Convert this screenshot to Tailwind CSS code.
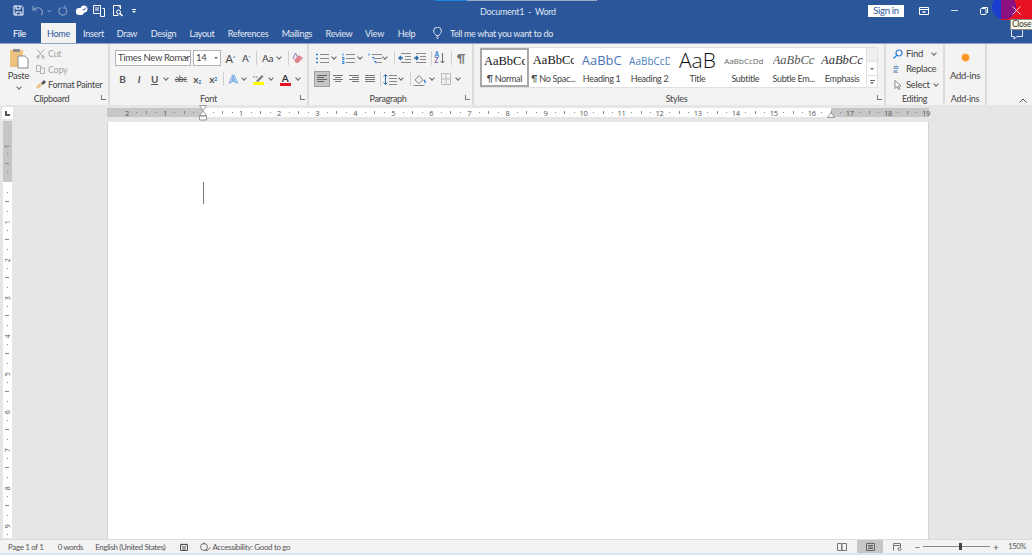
<!DOCTYPE html>
<html lang="en">
<head>
<meta charset="UTF-8">
<title>Document1 - Word</title>
<script src="https://cdn.jsdelivr.net/npm/@tailwindcss/browser@4"></script>
</head>
<body class="w-[1032px] h-[555px] overflow-hidden bg-[#e6e6e6] font-['Lato',sans-serif] text-[#444] text-[9px] tracking-[-0.3px] leading-none flex flex-col">

<!-- title bar -->
<header class="relative h-[23px] shrink-0 bg-[#2b579a] text-white flex items-center">
  <div class="absolute left-[435px] top-0 h-px w-[32px] bg-[#1a86e0]"></div>
  <div class="absolute left-[467px] top-0 h-px w-[130px] bg-[#9aa9c4]"></div>
  <div class="flex items-center pl-[13px] h-full w-[440px] pb-[2px]">
    <svg class="w-[11px] h-[11px]" viewBox="0 0 11 11" fill="none" stroke="#fff"><path d="M1 1h7.5L10 2.5V10H1z"/><path d="M3 1v3h4V1M3 10V7h5v3"/></svg>
    <svg class="w-[12px] h-[11px] ml-[8px] opacity-40" viewBox="0 0 12 11" fill="none" stroke="#fff" stroke-width="1.2"><path d="M1 1v4h4M1.5 5C3 2.5 7 2 9 4s1.5 4.5 0 6"/></svg>
    <span class="ml-[4px] w-[3px] h-[3px] border-r border-b border-white/40 rotate-45"></span>
    <svg class="w-[11px] h-[11px] ml-[6px] opacity-40" viewBox="0 0 11 11" fill="none" stroke="#fff" stroke-width="1.2"><path d="M4 2.5a4 4 0 1 0 4 .3M8 .5V3H5.5"/></svg>
    <svg class="w-[13px] h-[12px] ml-[7px]" viewBox="0 0 13 12" fill="#fff"><rect x="1" y="3" width="8" height="7" rx="3"/><circle cx="9" cy="4" r="3.5"/><path d="M7.500 4l1.200 1.200L11 2.500" stroke="#2b579a" fill="none"/></svg>
    <svg class="w-[12px] h-[12px] ml-[5px]" viewBox="0 0 12 12" fill="none" stroke="#fff"><path d="M.5.5h7v8h-7zM2 3h4M2 5h4"/><path d="M9.500 3.500h2v8h-4v-3"/></svg>
    <svg class="w-[12px] h-[12px] ml-[7px]" viewBox="0 0 12 12" fill="none" stroke="#fff"><path d="M8.500 4V.5h-7v10h5M6 .5 8.500 3"/><circle cx="6.500" cy="7" r="2"/><path d="m8 8.500 2.500 2.500" stroke-width="1.5"/></svg>
    <div class="ml-[8px] flex flex-col items-center gap-px"><i class="w-[4px] h-px bg-white"></i><i class="border-x-[2px] border-t-[2px] border-x-transparent border-t-white"></i></div>
  </div>
  <div class="w-[390px] text-[9px] text-[#dde5f1] pl-[40px] pb-[1px]">Document1 &nbsp;- &nbsp;Word</div>
  <div class="w-[36px] h-[12px] ml-[38px] mb-[1px] bg-white text-[#2b579a] text-[9.5px] flex items-center justify-center">Sign in</div>
  <svg class="w-[10px] h-[8px] ml-[15px] mb-[1px]" viewBox="0 0 10 8" fill="none" stroke="#fff"><path d="M.5.5h9v7h-9zM.5 2.500h9"/><path d="M3.500 5h3" stroke-width="1.5"/></svg>
  <i class="block w-[7px] h-px bg-white/80 ml-[22px] mb-[2px]"></i>
  <svg class="w-[8px] h-[8px] ml-[22px] mb-[1px]" viewBox="0 0 8 8" fill="none" stroke="#fff"><rect x=".5" y="1.500" width="5.500" height="6" rx="1"/><path d="M2.500 1V.5H7.500V6"/></svg>
  <!-- close button with pointer highlight -->
  <div class="absolute left-[1001px] right-0 top-0 h-[20px] bg-[#e81123]"></div>
  <div class="absolute left-[992px] top-[-5px] w-[24px] h-[24px] rounded-full overflow-hidden bg-[#1a3fd0]"><div class="ml-[9px] h-full bg-[#8a0f80]"></div></div>
  <svg class="absolute left-[1012px] top-[6px] w-[9px] h-[9px]" viewBox="0 0 9 9" stroke="#e9c9e6"><path d="M.5.5l8 8M8.500.5l-8 8"/></svg>
</header>

<!-- tabs -->
<nav class="relative h-[20px] shrink-0 bg-[#2b579a] text-[#e3e9f3] flex items-stretch">
  <div class="w-[41px] pl-[13px] flex items-center text-white">File</div>
  <div class="w-[35px] bg-[#f3f3f3] text-[#2b579a] flex items-center justify-center">Home</div>
  <div class="w-[35px] flex items-center justify-center">Insert</div>
  <div class="w-[32px] flex items-center justify-center">Draw</div>
  <div class="w-[41px] flex items-center justify-center">Design</div>
  <div class="w-[36px] flex items-center justify-center">Layout</div>
  <div class="w-[56px] flex items-center justify-center">References</div>
  <div class="w-[42px] flex items-center justify-center">Mailings</div>
  <div class="w-[42px] flex items-center justify-center">Review</div>
  <div class="w-[29px] flex items-center justify-center">View</div>
  <div class="w-[35px] flex items-center justify-center">Help</div>
  <svg class="w-[9px] h-[12px] ml-[9px] self-center" viewBox="0 0 9 12" fill="none" stroke="#fff" stroke-width=".8"><path d="M3 8.500C2.500 7 .6 6 .6 4a3.900 3.900 0 0 1 7.800 0C8.400 6 6.500 7 6 8.500zM3.200 10h2.600M3.800 11.500h1.400"/></svg>
  <div class="ml-[8px] flex items-center">Tell me what you want to do</div>
  <svg class="absolute left-[1011px] top-[6px] w-[12px] h-[11px]" viewBox="0 0 12 11" fill="none" stroke="#e3e9f3"><path d="M.5.5h11v7H6l-3 2.500V7.500H.5z"/></svg>
  <!-- tooltip -->
  <div class="absolute left-[1010px] top-[-4px] w-[23px] h-[11px] bg-[#fdfbe8] border border-[#8a8a8a] text-[#333] text-[8.5px] flex items-center justify-center">Close</div>
</nav>

<!-- ribbon -->
<section class="h-[62px] shrink-0 bg-[#f3f3f3] border-t border-[#8fa6c9] flex">
  <!-- clipboard -->
  <div class="w-[110px] border-r-2 border-[#dcdcdc] flex flex-col">
    <div class="h-[50px] flex">
      <div class="w-[36px] pl-px flex flex-col items-center pt-[4px]">
        <svg class="w-[20px] h-[21px]" viewBox="0 0 20 21"><rect x="1" y="2" width="13" height="17" fill="#ecc27e"/><rect x="4" y="1" width="7" height="3" fill="#8d8d8d"/><path d="M9 8h7l3 3v9H9z" fill="#fff" stroke="#8a8a8a"/></svg>
        <span class="mt-[2px] text-[9.5px]">Paste</span>
        <span class="mt-[4px] w-[4px] h-[4px] border-r border-b border-[#666] rotate-45"></span>
      </div>
      <div class="flex flex-col pt-[5px] gap-[6.5px]">
        <div class="flex items-center gap-[3px] h-[9px] text-[#a6a6a6]"><svg class="w-[9px] h-[10px]" viewBox="0 0 9 10" fill="none" stroke="#a6a6a6"><path d="M1 .5 6.500 7M8 .5 2.500 7"/><circle cx="2" cy="8" r="1.2"/><circle cx="7" cy="8" r="1.2"/></svg>Cut</div>
        <div class="flex items-center gap-[3px] h-[9px] text-[#a6a6a6]"><svg class="w-[9px] h-[9px]" viewBox="0 0 9 9" fill="none" stroke="#b0b0b0"><path d="M.5.5h4v6h-4zM4.500 3h4v5.500h-4z"/></svg>Copy</div>
        <div class="flex items-center gap-[2px] h-[9px]"><svg class="w-[10px] h-[9px]" viewBox="0 0 10 9"><path d="M0 7l4-4 2 2-4 4z" fill="#ecc27e"/><path d="M5 3l3-3 2 2-3 3z" fill="#555"/></svg>Format Painter</div>
      </div>
    </div>
    <div class="relative flex-1 text-center pr-[5px]">Clipboard<span class="absolute right-[2px] top-[1px] w-[5px] h-[5px] border-l border-b border-[#777]"></span></div>
  </div>
  <!-- font -->
  <div class="w-[199px] pl-[5px] border-r-2 border-[#dcdcdc] flex flex-col">
    <div class="h-[50px] flex flex-col">
      <div class="flex items-center h-[16px] mt-[6px]">
        <div class="w-[76px] h-[16px] bg-white border border-[#b5b5b5] flex items-center pl-[2px] text-[9.5px] whitespace-nowrap overflow-hidden relative">Times New Romar<span class="absolute right-[2px] top-[6px] border-x-[2px] border-t-[2px] border-x-transparent border-t-[#666]"></span></div>
        <div class="w-[28px] h-[16px] ml-[2px] bg-white border border-[#b5b5b5] flex items-center pl-[2px] text-[9.5px] relative">14<span class="absolute right-[2px] top-[6px] border-x-[2px] border-t-[2px] border-x-transparent border-t-[#666]"></span></div>
        <span class="ml-[3px] w-[13px] text-center text-[11px]">A<sup class="text-[5px] text-[#2b6cb0]">^</sup></span>
        <span class="ml-[2px] w-[14px] text-center text-[10px]">A<sup class="text-[5px] text-[#2b6cb0]">ˇ</sup></span>
        <i class="w-px h-[14px] bg-[#d0d0d0] ml-[3px]"></i>
        <span class="ml-[3px] w-[15px] text-center text-[10px]">Aa</span>
        <span class="ml-[2px] w-[4px] h-[4px] -mt-[2px] border-r border-b border-[#666] rotate-45"></span>
        <i class="w-px h-[14px] bg-[#d0d0d0] ml-[7px]"></i>
        <svg class="w-[12px] h-[12px] ml-[3px]" viewBox="0 0 12 12"><path d="M2 8 7 3l4 3-5 5H4z" fill="#e0858f"/><path d="M1 7 3.500 1 5.500 5" stroke="#8a7ab8" fill="none"/></svg>
      </div>
      <div class="flex items-center h-[16px] mt-[5px] text-[#555] text-[10px]">
        <b class="w-[15px] text-center">B</b>
        <i class="ml-[1px] w-[16px] text-center font-bold">I</i>
        <u class="w-[15px] text-center font-bold">U</u>
        <span class="w-[8px] flex justify-center"><span class="w-[4px] h-[4px] -mt-[2px] border-r border-b border-[#666] rotate-45"></span></span>
        <s class="ml-[3px] w-[16px] text-center text-[8.5px]">abc</s>
        <span class="w-[16px] text-center font-bold">x<sub class="text-[5px] text-[#2b6cb0]">2</sub></span>
        <span class="w-[16px] text-center font-bold">x<sup class="text-[5px] text-[#2b6cb0]">2</sup></span>
        <i class="w-px h-[14px] bg-[#d0d0d0] ml-[2px]"></i>
        <span class="ml-[2px] w-[14px] text-center text-[12px] text-white font-bold [-webkit-text-stroke:0.6px_#2b7cd3]">A</span>
        <span class="w-[7px] flex justify-center"><span class="w-[4px] h-[4px] -mt-[2px] border-r border-b border-[#666] rotate-45"></span></span>
        <span class="ml-[5px] w-[12px] flex flex-col items-center"><svg class="w-[11px] h-[8px]" viewBox="0 0 11 8"><path d="M3 7l6-6 1.500 1.500L5 8z" fill="#777"/><path d="M0 3h5" stroke="#777" stroke-dasharray="1 .5"/></svg><i class="w-[11px] h-[3px] bg-[#ffff00]"></i></span>
        <span class="ml-[3px] w-[8px] flex justify-center"><span class="w-[4px] h-[4px] -mt-[2px] border-r border-b border-[#666] rotate-45"></span></span>
        <span class="ml-[3px] w-[14px] flex flex-col items-center text-[10px] font-bold text-[#333]">A<i class="w-[11px] h-[3px] bg-[#e81123]"></i></span>
        <span class="ml-[2px] w-[8px] flex justify-center"><span class="w-[4px] h-[4px] -mt-[2px] border-r border-b border-[#666] rotate-45"></span></span>
      </div>
    </div>
    <div class="relative flex-1 text-center pr-[5px]">Font<span class="absolute right-[2px] top-[1px] w-[5px] h-[5px] border-l border-b border-[#777]"></span></div>
  </div>
  <!-- paragraph -->
  <div class="w-[165px] border-r-2 border-[#dcdcdc] flex flex-col">
    <div class="h-[50px] flex flex-col">
      <div class="flex items-center h-[16px] mt-[6px]">
        <svg class="ml-[6px] w-[14px] h-[11px]" viewBox="0 0 14 11" fill="none" stroke="#888"><path d="M5 1.500h9M5 5.500h9M5 9.500h9"/><path d="M1 1.500h2M1 5.500h2M1 9.500h2" stroke="#2b7cd3" stroke-width="1.5"/></svg>
        <span class="ml-[2px] w-[6px] flex justify-center"><span class="w-[4px] h-[4px] -mt-[2px] border-r border-b border-[#666] rotate-45"></span></span>
        <svg class="ml-[4px] w-[14px] h-[11px]" viewBox="0 0 14 11" fill="none" stroke="#888"><path d="M5 1.500h9M5 5.500h9M5 9.500h9"/><path d="M2 .5v2M1 4.500h2v2H1M1 8.500h2v2H1" stroke="#2b7cd3"/></svg>
        <span class="ml-[2px] w-[6px] flex justify-center"><span class="w-[4px] h-[4px] -mt-[2px] border-r border-b border-[#666] rotate-45"></span></span>
        <svg class="ml-[5px] w-[14px] h-[11px]" viewBox="0 0 14 11" fill="none" stroke="#888"><path d="M4 1.500h10M7 5.500h7M9 9.500h5"/><path d="M1 .5v2M4 4.500h2v2M6 8.500h2v2" stroke="#2b7cd3"/></svg>
        <span class="w-[6px] flex justify-center"><span class="w-[4px] h-[4px] -mt-[2px] border-r border-b border-[#666] rotate-45"></span></span>
        <i class="w-px h-[14px] bg-[#d0d0d0] ml-[6px]"></i>
        <svg class="ml-[3px] w-[13px] h-[11px]" viewBox="0 0 13 11" fill="none" stroke="#888"><path d="M3 .5h10M7 3.500h6M7 6.500h6M3 9.500h10"/><path d="M5 5H1M3 3 1 5l2 2" stroke="#2b6cb0" stroke-width="1.5"/></svg>
        <svg class="ml-[2px] w-[13px] h-[11px]" viewBox="0 0 13 11" fill="none" stroke="#888"><path d="M3 .5h10M7 3.500h6M7 6.500h6M3 9.500h10"/><path d="M1 5h4M3 3l2 2-2 2" stroke="#2b6cb0" stroke-width="1.5"/></svg>
        <i class="w-px h-[14px] bg-[#d0d0d0] ml-[5px]"></i>
        <span class="ml-px w-[13px] flex items-center justify-center"><span class="flex flex-col text-[6.5px] leading-[6.5px] font-bold"><span class="text-[#2b7cd3]">A</span><span class="text-[#8a5db5]">Z</span></span><svg class="w-[5px] h-[11px] ml-px" viewBox="0 0 5 11" fill="none" stroke="#666"><path d="M2.500 0v10M.5 8l2 2 2-2"/></svg></span>
        <i class="w-px h-[14px] bg-[#d0d0d0] ml-[5px]"></i>
        <span class="ml-[2px] w-[14px] text-center text-[12px] font-bold text-[#777]">¶</span>
      </div>
      <div class="flex items-center h-[16px] mt-[5px]">
        <span class="ml-[5px] w-[16px] h-[16px] bg-[#c6c6c6] border border-[#9f9f9f] flex items-center justify-center"><svg class="w-[10px] h-[8px]" viewBox="0 0 10 8" stroke="#666"><path d="M0 .5h10M0 2.500h7M0 4.500h10M0 6.500h7"/></svg></span>
        <span class="ml-px w-[14px] flex justify-center"><svg class="w-[10px] h-[8px]" viewBox="0 0 10 8" stroke="#777"><path d="M0 .5h10M2 2.500h6M0 4.500h10M2 6.500h6"/></svg></span>
        <span class="ml-[2px] w-[14px] flex justify-center"><svg class="w-[10px] h-[8px]" viewBox="0 0 10 8" stroke="#777"><path d="M0 .5h10M3 2.500h7M0 4.500h10M3 6.500h7"/></svg></span>
        <span class="ml-[2px] w-[14px] flex justify-center"><svg class="w-[10px] h-[8px]" viewBox="0 0 10 8" stroke="#777"><path d="M0 .5h10M0 2.500h10M0 4.500h10M0 6.500h10"/></svg></span>
        <i class="w-px h-[14px] bg-[#d0d0d0] ml-[3px]"></i>
        <svg class="ml-[2px] w-[14px] h-[11px]" viewBox="0 0 14 11" fill="none" stroke="#888"><path d="M6 1.500h8M6 4.500h8M6 7.500h8M6 10.500h8"/><path d="M2.500 1v9M.5 2.500l2-2 2 2M.5 8.500l2 2 2-2" stroke="#2b6cb0"/></svg>
        <span class="ml-px w-[6px] flex justify-center"><span class="w-[4px] h-[4px] -mt-[2px] border-r border-b border-[#666] rotate-45"></span></span>
        <i class="w-px h-[14px] bg-[#d0d0d0] ml-[6px]"></i>
        <svg class="ml-[2px] w-[14px] h-[13px]" viewBox="0 0 14 13" fill="none" stroke="#888"><path d="M2 7 6 2.500 10 7l-4 3.500zM.5 12.500h11"/><path d="M11 7c1 1 1.500 2 1 3" stroke="#2b7cd3" stroke-width="1.5"/></svg>
        <span class="ml-[2px] w-[6px] flex justify-center"><span class="w-[4px] h-[4px] -mt-[2px] border-r border-b border-[#666] rotate-45"></span></span>
        <svg class="ml-[4px] w-[14px] h-[12px]" viewBox="0 0 14 12" fill="none" stroke="#bbb"><path d="M2.500.5h9v11h-9zM7 .5v11M2.500 6h9"/></svg>
        <span class="ml-[2px] w-[6px] flex justify-center"><span class="w-[4px] h-[4px] -mt-[2px] border-r border-b border-[#666] rotate-45"></span></span>
      </div>
    </div>
    <div class="relative flex-1 text-center pr-[5px]">Paragraph<span class="absolute right-[2px] top-[1px] w-[5px] h-[5px] border-l border-b border-[#777]"></span></div>
  </div>
  <!-- styles -->
  <div class="w-[412px] border-r-2 border-[#dcdcdc] flex flex-col">
    <div class="h-[50px] pl-[6px] pt-[3px]">
      <div class="w-[398px] h-[41px] bg-white border border-[#e0e0e0] flex tracking-normal">
        <div class="-ml-px w-[49px] h-[39px] border-2 border-[#a8a8a8] flex flex-col items-center overflow-hidden"><div class="h-[23px] w-[41px] overflow-hidden flex items-center whitespace-nowrap font-['Liberation_Serif'] text-[12.5px] text-[#111]">AaBbCc</div><span class="mt-[1px] whitespace-nowrap tracking-[-0.3px]">¶ Normal</span></div>
        <div class="w-[49px] flex flex-col items-center"><div class="h-[25px] w-[41px] overflow-hidden flex items-center whitespace-nowrap font-['Liberation_Serif'] text-[12.5px] text-[#111]">AaBbCc</div><span class="mt-[1px] whitespace-nowrap tracking-[-0.3px]">¶ No Spac...</span></div>
        <div class="w-[48px] flex flex-col items-center"><div class="h-[25px] w-[40px] overflow-hidden flex items-center whitespace-nowrap font-['Open_Sans'] text-[13px] text-[#4a74b4]">AaBbCc</div><span class="mt-[1px] whitespace-nowrap tracking-[-0.3px]">Heading 1</span></div>
        <div class="w-[48px] flex flex-col items-center"><div class="h-[25px] w-[41px] overflow-hidden flex items-center whitespace-nowrap font-['Open_Sans'] text-[10px] text-[#4a7ec0]">AaBbCcD</div><span class="mt-[1px] whitespace-nowrap tracking-[-0.3px]">Heading 2</span></div>
        <div class="w-[48px] flex flex-col items-center"><div class="h-[25px] w-[38px] overflow-hidden flex items-center justify-center whitespace-nowrap font-['Open_Sans'] text-[21px] font-light text-[#111]">AaB</div><span class="mt-[1px] whitespace-nowrap tracking-[-0.3px]">Title</span></div>
        <div class="w-[48px] flex flex-col items-center"><div class="h-[25px] w-[42px] overflow-hidden flex items-center whitespace-nowrap font-['Open_Sans'] text-[8px] text-[#666]">AaBbCcDd</div><span class="mt-[1px] whitespace-nowrap tracking-[-0.3px]">Subtitle</span></div>
        <div class="w-[49px] flex flex-col items-center"><div class="h-[25px] w-[42px] overflow-hidden flex items-center whitespace-nowrap font-['Liberation_Serif'] italic text-[12.5px] text-[#555]">AaBbCc</div><span class="mt-[1px] whitespace-nowrap tracking-[-0.3px]">Subtle Em...</span></div>
        <div class="w-[48px] flex flex-col items-center"><div class="h-[25px] w-[42px] overflow-hidden flex items-center whitespace-nowrap font-['Liberation_Serif'] italic text-[12.5px] text-[#333]">AaBbCc</div><span class="mt-[1px] whitespace-nowrap tracking-[-0.3px]">Emphasis</span></div>
        <div class="ml-auto w-[11px] flex flex-col border-l border-[#e0e0e0]">
          <div class="h-[14px] bg-[#efefef] border-b border-[#e0e0e0]"></div>
          <div class="h-[14px] border-b border-[#e0e0e0] flex items-center justify-center"><span class="border-x-[2px] border-t-[2px] border-x-transparent border-t-[#666]"></span></div>
          <div class="flex-1 flex flex-col items-center justify-center gap-px"><i class="w-[5px] h-px bg-[#666]"></i><span class="border-x-[2px] border-t-[2px] border-x-transparent border-t-[#666]"></span></div>
        </div>
      </div>
    </div>
    <div class="relative flex-1 text-center pr-[5px]">Styles<span class="absolute right-[2px] top-[1px] w-[5px] h-[5px] border-l border-b border-[#777]"></span></div>
  </div>
  <!-- editing -->
  <div class="w-[59px] border-r-2 border-[#dcdcdc] flex flex-col">
    <div class="h-[50px] pl-[7px] pt-[5px] flex flex-col gap-[6.5px] text-[9.5px]">
      <div class="flex items-center gap-[3px] h-[9px]"><svg class="w-[10px] h-[10px]" viewBox="0 0 10 10" fill="none" stroke="#2b7cd3" stroke-width="1.2"><circle cx="6" cy="4" r="3"/><path d="M4 6 .5 9.500"/></svg>Find<span class="ml-[6px] w-[4px] h-[4px] -mt-[2px] border-r border-b border-[#666] rotate-45"></span></div>
      <div class="flex items-center gap-[3px] h-[9px]"><span class="w-[10px] text-[5.5px] leading-[4px] text-[#2b6cb0]">ab<br>ac</span>Replace</div>
      <div class="flex items-center gap-[3px] h-[9px]"><svg class="w-[10px] h-[10px]" viewBox="0 0 10 10" fill="#fff" stroke="#888"><path d="M2 .5v8l2-2 1.500 3 1.500-.7L5.500 6H8z"/></svg>Select<span class="ml-[1px] w-[4px] h-[4px] -mt-[2px] border-r border-b border-[#666] rotate-45"></span></div>
    </div>
    <div class="flex-1 text-center">Editing</div>
  </div>
  <!-- add-ins -->
  <div class="w-[42px] border-r-2 border-[#dcdcdc] flex flex-col">
    <div class="h-[50px] flex flex-col items-center pt-[10px]">
      <i class="w-[7px] h-[7px] rounded-full bg-[#f7931e] ring-1 ring-[#fbd9a8]"></i>
      <span class="mt-[10px] text-[9.5px]">Add-ins</span>
    </div>
    <div class="flex-1 text-center">Add-ins</div>
  </div>
  <div class="flex-1 flex items-end justify-end pr-[5px] pb-[2px]">
    <svg class="w-[8px] h-[5px]" viewBox="0 0 8 5" fill="none" stroke="#555"><path d="M.5 4.500 4 1l3.500 3.500"/></svg>
  </div>
</section>

<!-- horizontal ruler row -->
<div class="h-[17px] shrink-0 flex items-start pt-[3px] bg-[#e6e6e6]">
  <div class="ml-[2px] w-[11px] h-[12px] -mt-[1px] bg-white flex items-center justify-center"><span class="w-[5px] h-[5px] border-l-2 border-b-2 border-[#555]"></span></div>
  <div class="relative ml-[94px] w-[822px] h-[9px] bg-white" id="hruler">
    <div class="absolute left-0 top-0 h-full w-[96px] bg-[#c6c6c6]"></div>
    <div class="absolute right-0 top-0 h-full w-[98px] bg-[#c6c6c6]"></div>
    <!-- indent markers -->
    <svg class="absolute left-[92px] top-[-3px] w-[8px] h-[16px] z-10" viewBox="0 0 8 16" fill="#fff" stroke="#999"><path d="M.5.5h7L4 5.500zM4 6l3.500 4.500h-7zM.5 11h7v4h-7z"/></svg>
    <svg class="absolute left-[720px] top-[4px] w-[8px] h-[6px] z-10" viewBox="0 0 8 6" fill="#fff" stroke="#999"><path d="M4 .5 7.500 5.500h-7z"/></svg>
  </div>
</div>

<!-- document area -->
<main class="flex-1 min-h-0 flex">
  <div class="w-[107px] shrink-0 flex">
    <div class="relative ml-[3px] w-[9px] h-full bg-white -mt-px" id="vruler">
      <div class="absolute left-0 top-0 w-full h-[61px] bg-[#c6c6c6]"></div>
    </div>
  </div>
  <div class="w-[822px] bg-white border-x border-[#d4d4d4] relative">
    <div class="absolute left-[95px] top-[60px] w-px h-[22px] bg-[#777]"></div>
  </div>
</main>

<!-- status bar -->
<footer class="h-[14px] shrink-0 bg-[#f3f3f3] border-t border-[#dcdcdc] flex items-center justify-between text-[#555] text-[8px] tracking-[-0.35px] whitespace-nowrap">
  <div class="flex items-center">
    <span class="ml-[8px]">Page 1 of 1</span>
    <span class="ml-[14px]">0 words</span>
    <span class="ml-[12px]">English (United States)</span>
    <svg class="ml-[15px] w-[8px] h-[8px]" viewBox="0 0 8 8" fill="none" stroke="#555"><path d="M.5 1.500h7v6h-7z"/><path d="M2 .5v2M6 .5v2M2 4h4M2 6h4"/></svg>
    <svg class="ml-[12px] w-[11px] h-[10px] mr-px" viewBox="0 0 11 10" fill="none" stroke="#555" stroke-width=".8"><circle cx="4" cy="5" r="3.500"/><path d="M4 .5v2M5 7l2 2 3.500-4"/></svg>
    <span>Accessibility: Good to go</span>
  </div>
  <div class="flex items-center pr-[6px]">
    <svg class="w-[10px] h-[8px]" viewBox="0 0 10 8" fill="none" stroke="#777"><path d="M.5.5h4v7h-4zM5 .5h4.500v7H5z"/></svg>
    <div class="ml-[10px] w-[26px] h-[14px] bg-[#c6c6c6] flex items-center justify-center"><svg class="w-[9px] h-[8px]" viewBox="0 0 9 8" fill="none" stroke="#666"><path d="M.5.5h8v7h-8zM2 2.500h5M2 4h5M2 5.500h5"/></svg></div>
    <svg class="ml-[10px] w-[9px] h-[8px]" viewBox="0 0 9 8" fill="none" stroke="#777"><path d="M.5 7.500V.5h7v4M.5 2.500h7"/><circle cx="6.500" cy="6" r="1.500"/></svg>
    <span class="ml-[12px] text-[10px] leading-none">−</span>
    <div class="relative ml-[3px] w-[67px] h-px bg-[#888]"><i class="absolute left-[36px] -top-[3px] w-[3px] h-[7px] bg-[#444]"></i></div>
    <span class="ml-[3px] text-[10px] leading-none">+</span>
    <span class="ml-[10px] text-[7.5px]">150%</span>
  </div>
</footer>
<div class="h-[2px] shrink-0 bg-[#d9e6ef]"></div>

<script>
  // ruler marks, one inch is 38.05px
  const h = document.getElementById("hruler");
  const origin = 96;
  const step = 38.05;
  for (let n = -2; n <= 19; n++) {
    for (let q = 0; q < 4; q++) {
      const x = origin + n * step + q * step / 4;
      if (x < 0 || x > 822) continue;
      const el = document.createElement("span");
      el.style.left = x + "px";
      if (q === 0 && n !== 0) {
        el.className = "absolute top-[1px] -translate-x-1/2 font-['Open_Sans'] text-[7.5px] leading-[8px] text-[#555]";
        el.textContent = Math.abs(n);
      } else if (q === 2) {
        el.className = "absolute top-[3px] w-px h-[3px] bg-[#888]";
      } else if (q !== 0) {
        el.className = "absolute top-[4px] w-px h-px bg-[#888]";
      }
      h.appendChild(el);
    }
  }
  const v = document.getElementById("vruler");
  const vorigin = 61;
  for (let n = -1; n <= 9; n++) {
    for (let q = 0; q < 4; q++) {
      const y = vorigin + n * step + q * step / 4;
      if (y < 0 || y > 416) continue;
      const el = document.createElement("span");
      el.style.top = y + "px";
      if (q === 0 && n !== 0) {
        el.className = "absolute left-[2px] w-[5px] font-['Open_Sans'] text-[7px] leading-[5px] text-center -rotate-90 text-[#555]";
        el.textContent = Math.abs(n);
      } else if (q === 2) {
        el.className = "absolute left-[2px] w-[4px] h-px bg-[#888]";
      } else if (q !== 0) {
        el.className = "absolute left-[4px] w-px h-px bg-[#888]";
      }
      v.appendChild(el);
    }
  }
</script>
</body>
</html>
